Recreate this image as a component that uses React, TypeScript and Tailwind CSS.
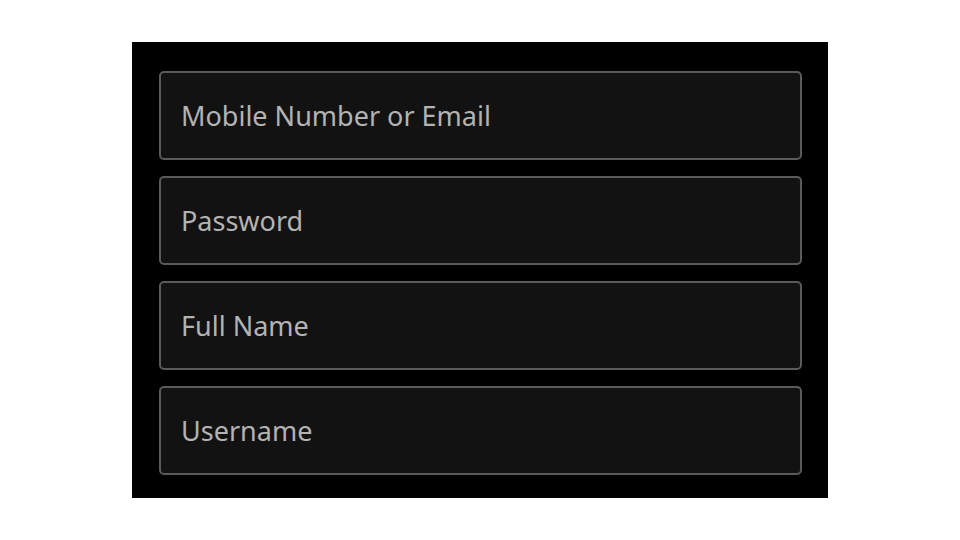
import React from 'react';

const fields = ['Mobile Number or Email', 'Password', 'Full Name', 'Username'];

export default function App() {
  return (
    <div className="w-[960px] h-[540px] bg-white pt-[42px] pl-[132px]">
      <div className="w-[696px] h-[456px] bg-black pt-[29px] pl-[27px] flex flex-col gap-4">
        {fields.map((f) => (
          <input
            key={f}
            placeholder={f}
            className="w-[643px] h-[89px] bg-[#121212] border-2 border-[#5a5a5a] rounded-[5px] pl-5 pr-5 text-[27px] text-[#b3b3b3] placeholder:text-[#b3b3b3] outline-none font-['Noto_Sans',sans-serif]"
          />
        ))}
      </div>
    </div>
  );
}
